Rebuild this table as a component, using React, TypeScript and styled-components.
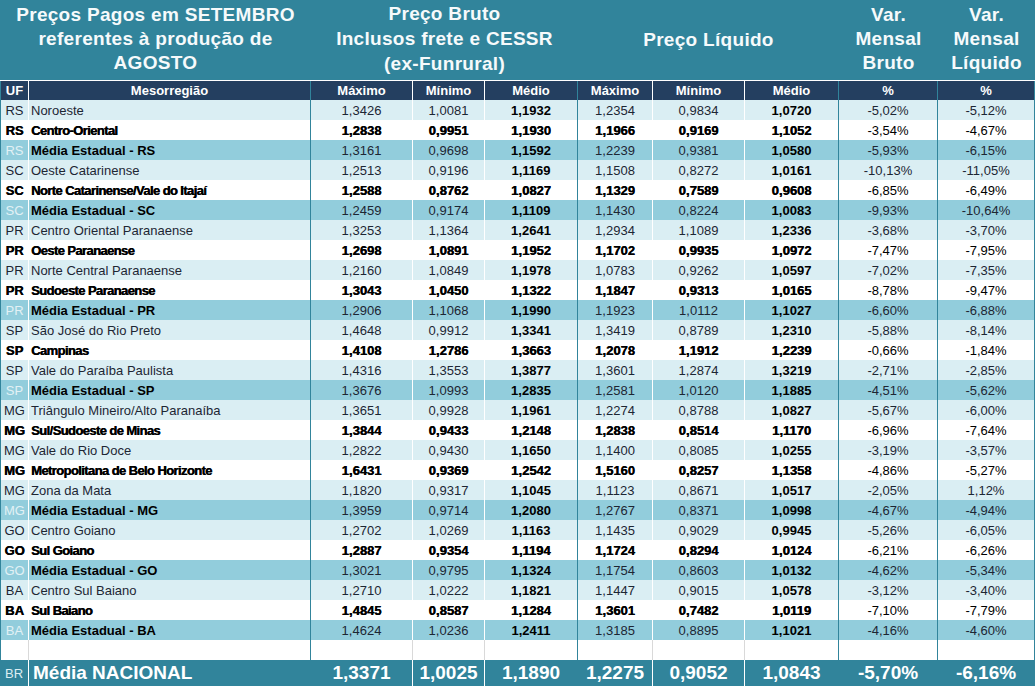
import React from "react";
import styled, { createGlobalStyle, css } from "styled-components";

const TEAL = "#31849b";
const NAVY = "#243f60";
const LIGHT = "#daeef3";
const MEDIUM = "#92cddc";
const COLS = "29px 282px 102px 72px 93px 75px 92px 94px 99px 97px";
const GROUP_END = [1, 4, 7, 8, 9];

const GlobalStyle = createGlobalStyle`
  html, body { margin: 0; padding: 0; background: #ffffff; }
  body { font-family: "Liberation Sans", Arial, sans-serif; }
  * { box-sizing: border-box; }
`;

const Sheet = styled.div`
  width: 1035px;
`;

const TitleBand = styled.div`
  display: grid;
  grid-template-columns: 311px 267px 261px 99px 97px;
  height: 80px;
  background: ${TEAL};
  color: #f6fafb;
  font-weight: bold;
  font-size: 19px;
  letter-spacing: 0.3px;
  line-height: 24px;
`;

const TitleCell = styled.div<{ $shift?: number; $lh?: number }>`
  display: flex;
  align-items: center;
  justify-content: center;
  text-align: center;
  padding-bottom: ${(p) => p.$shift ?? 0}px;
  line-height: ${(p) => p.$lh ?? 24}px;
`;

type RowKind = "light" | "strong" | "avg" | "empty";

const rowBg: Record<RowKind, string> = {
  light: LIGHT,
  strong: "#ffffff",
  avg: MEDIUM,
  empty: "#ffffff",
};

const Row = styled.div<{ $kind: RowKind }>`
  display: grid;
  grid-template-columns: ${COLS};
  height: 20px;
  background: ${(p) => rowBg[p.$kind]};
  color: ${(p) => (p.$kind === "strong" ? "#000" : "#1d2633")};
  font-size: 13px;
  ${(p) =>
    p.$kind === "strong" &&
    css`
      font-weight: bold;
      text-shadow: 0.45px 0 0 #000;
    `}
`;

const HeaderRow = styled.div`
  display: grid;
  grid-template-columns: ${COLS};
  height: 20px;
  background: ${NAVY};
  color: #ffffff;
  font-weight: bold;
  font-size: 13px;
  border-top: 1px solid #ffffff;
`;

const FooterRow = styled.div`
  display: grid;
  grid-template-columns: ${COLS};
  height: 26px;
  background: ${TEAL};
  color: #ffffff;
  font-weight: bold;
  font-size: 19px;
`;

const Cell = styled.div<{
  $group?: boolean;
  $align?: "left" | "center";
  $bold?: boolean;
  $normal?: boolean;
  $faded?: boolean;
  $tight?: boolean;
  $edge?: boolean;
  $sepColor?: string;
}>`
  display: flex;
  align-items: center;
  justify-content: ${(p) => (p.$align === "left" ? "flex-start" : "center")};
  padding-left: ${(p) => (p.$align === "left" ? "2px" : "0")};
  border-right: 1px solid
    ${(p) => (p.$group ? TEAL : p.$sepColor ?? "#ffffff")};
  white-space: nowrap;
  overflow: hidden;
  ${(p) =>
    p.$edge &&
    css`
      border-left: 1px solid ${TEAL};
    `}
  ${(p) =>
    p.$bold &&
    css`
      font-weight: bold;
      color: #000;
    `}
  ${(p) =>
    p.$tight &&
    css`
      letter-spacing: -0.6px;
    `}
  ${(p) =>
    p.$normal &&
    css`
      font-weight: normal;
      text-shadow: none;
    `}
  ${(p) =>
    p.$faded &&
    css`
      color: #e2f1f5;
      font-weight: normal;
    `}
`;

const FooterUf = styled(Cell)`
  font-size: 13px;
  font-weight: normal;
  color: #dcedf2;
`;

const FooterName = styled(Cell)`
  padding-left: 4px;
`;

type DataRow = {
  uf: string;
  name: string;
  kind: RowKind;
  v: string[];
};

const rows: DataRow[] = [
  { uf: "RS", name: "Noroeste", kind: "light", v: ["1,3426", "1,0081", "1,1932", "1,2354", "0,9834", "1,0720", "-5,02%", "-5,12%"] },
  { uf: "RS", name: "Centro-Oriental", kind: "strong", v: ["1,2838", "0,9951", "1,1930", "1,1966", "0,9169", "1,1052", "-3,54%", "-4,67%"] },
  { uf: "RS", name: "Média Estadual - RS", kind: "avg", v: ["1,3161", "0,9698", "1,1592", "1,2239", "0,9381", "1,0580", "-5,93%", "-6,15%"] },
  { uf: "SC", name: "Oeste Catarinense", kind: "light", v: ["1,2513", "0,9196", "1,1169", "1,1508", "0,8272", "1,0161", "-10,13%", "-11,05%"] },
  { uf: "SC", name: "Norte Catarinense/Vale do Itajaí", kind: "strong", v: ["1,2588", "0,8762", "1,0827", "1,1329", "0,7589", "0,9608", "-6,85%", "-6,49%"] },
  { uf: "SC", name: "Média Estadual - SC", kind: "avg", v: ["1,2459", "0,9174", "1,1109", "1,1430", "0,8224", "1,0083", "-9,93%", "-10,64%"] },
  { uf: "PR", name: "Centro Oriental Paranaense", kind: "light", v: ["1,3253", "1,1364", "1,2641", "1,2934", "1,1089", "1,2336", "-3,68%", "-3,70%"] },
  { uf: "PR", name: "Oeste Paranaense", kind: "strong", v: ["1,2698", "1,0891", "1,1952", "1,1702", "0,9935", "1,0972", "-7,47%", "-7,95%"] },
  { uf: "PR", name: "Norte Central Paranaense", kind: "light", v: ["1,2160", "1,0849", "1,1978", "1,0783", "0,9262", "1,0597", "-7,02%", "-7,35%"] },
  { uf: "PR", name: "Sudoeste Paranaense", kind: "strong", v: ["1,3043", "1,0450", "1,1322", "1,1847", "0,9313", "1,0165", "-8,78%", "-9,47%"] },
  { uf: "PR", name: "Média Estadual - PR", kind: "avg", v: ["1,2906", "1,1068", "1,1990", "1,1923", "1,0112", "1,1027", "-6,60%", "-6,88%"] },
  { uf: "SP", name: "São José do Rio Preto", kind: "light", v: ["1,4648", "0,9912", "1,3341", "1,3419", "0,8789", "1,2310", "-5,88%", "-8,14%"] },
  { uf: "SP", name: "Campinas", kind: "strong", v: ["1,4108", "1,2786", "1,3663", "1,2078", "1,1912", "1,2239", "-0,66%", "-1,84%"] },
  { uf: "SP", name: "Vale do Paraíba Paulista", kind: "light", v: ["1,4316", "1,3553", "1,3877", "1,3601", "1,2874", "1,3219", "-2,71%", "-2,85%"] },
  { uf: "SP", name: "Média Estadual - SP", kind: "avg", v: ["1,3676", "1,0993", "1,2835", "1,2581", "1,0120", "1,1885", "-4,51%", "-5,62%"] },
  { uf: "MG", name: "Triângulo Mineiro/Alto Paranaíba", kind: "light", v: ["1,3651", "0,9928", "1,1961", "1,2274", "0,8788", "1,0827", "-5,67%", "-6,00%"] },
  { uf: "MG", name: "Sul/Sudoeste de Minas", kind: "strong", v: ["1,3844", "0,9433", "1,2148", "1,2838", "0,8514", "1,1170", "-6,96%", "-7,64%"] },
  { uf: "MG", name: "Vale do Rio Doce", kind: "light", v: ["1,2822", "0,9430", "1,1650", "1,1400", "0,8085", "1,0255", "-3,19%", "-3,57%"] },
  { uf: "MG", name: "Metropolitana de Belo Horizonte", kind: "strong", v: ["1,6431", "0,9369", "1,2542", "1,5160", "0,8257", "1,1358", "-4,86%", "-5,27%"] },
  { uf: "MG", name: "Zona da Mata", kind: "light", v: ["1,1820", "0,9317", "1,1045", "1,1123", "0,8671", "1,0517", "-2,05%", "1,12%"] },
  { uf: "MG", name: "Média Estadual - MG", kind: "avg", v: ["1,3959", "0,9714", "1,2080", "1,2767", "0,8371", "1,0998", "-4,67%", "-4,94%"] },
  { uf: "GO", name: "Centro Goiano", kind: "light", v: ["1,2702", "1,0269", "1,1163", "1,1435", "0,9029", "0,9945", "-5,26%", "-6,05%"] },
  { uf: "GO", name: "Sul Goiano", kind: "strong", v: ["1,2887", "0,9354", "1,1194", "1,1724", "0,8294", "1,0124", "-6,21%", "-6,26%"] },
  { uf: "GO", name: "Média Estadual - GO", kind: "avg", v: ["1,3021", "0,9795", "1,1324", "1,1754", "0,8603", "1,0132", "-4,62%", "-5,34%"] },
  { uf: "BA", name: "Centro Sul Baiano", kind: "light", v: ["1,2710", "1,0222", "1,1821", "1,1447", "0,9015", "1,0578", "-3,12%", "-3,40%"] },
  { uf: "BA", name: "Sul Baiano", kind: "strong", v: ["1,4845", "0,8587", "1,1284", "1,3601", "0,7482", "1,0119", "-7,10%", "-7,79%"] },
  { uf: "BA", name: "Média Estadual - BA", kind: "avg", v: ["1,4624", "1,0236", "1,2411", "1,3185", "0,8895", "1,1021", "-4,16%", "-4,60%"] },
];

const headers = ["Máximo", "Mínimo", "Médio", "Máximo", "Mínimo", "Médio", "%", "%"];
const national = ["1,3371", "1,0025", "1,1890", "1,2275", "0,9052", "1,0843", "-5,70%", "-6,16%"];

const isGroupEnd = (col: number) => GROUP_END.includes(col);

function Data({ row }: { row: DataRow }) {
  const strong = row.kind === "strong";
  return (
    <Row $kind={row.kind}>
      <Cell $edge $faded={row.kind === "avg"}>
        {row.uf}
      </Cell>
      <Cell $group $align="left" $bold={row.kind === "avg"} $tight={strong}>
        {row.name}
      </Cell>
      {row.v.map((val, i) => {
        const col = i + 2;
        const isMedio = i === 2 || i === 5;
        const isVar = i >= 6;
        return (
          <Cell
            key={i}
            $group={isGroupEnd(col)}
            $bold={isMedio}
            $normal={isVar}
          >
            {val}
          </Cell>
        );
      })}
    </Row>
  );
}

export default function App() {
  return (
    <Sheet>
      <GlobalStyle />
      <TitleBand>
        <TitleCell $shift={2}>
          Preços Pagos em SETEMBRO
          <br />
          referentes à produção de
          <br />
          AGOSTO
        </TitleCell>
        <TitleCell $shift={4} $lh={25}>
          Preço Bruto
          <br />
          Inclusos frete e CESSR
          <br />
          (ex-Funrural)
        </TitleCell>
        <TitleCell>Preço Líquido</TitleCell>
        <TitleCell $shift={2}>
          Var.
          <br />
          Mensal
          <br />
          Bruto
        </TitleCell>
        <TitleCell $shift={2}>
          Var.
          <br />
          Mensal
          <br />
          Líquido
        </TitleCell>
      </TitleBand>
      <HeaderRow>
        <Cell $edge>UF</Cell>
        <Cell $group>Mesorregião</Cell>
        {headers.map((h, i) => (
          <Cell key={i} $group={isGroupEnd(i + 2)}>
            {h}
          </Cell>
        ))}
      </HeaderRow>
      {rows.map((r, i) => (
        <Data key={i} row={r} />
      ))}
      <Row $kind="empty">
        {Array.from({ length: 10 }).map((_, i) => (
          <Cell key={i} $edge={i === 0} $group={isGroupEnd(i)} $sepColor="#d9d9d9" />
        ))}
      </Row>
      <FooterRow>
        <FooterUf>BR</FooterUf>
        <FooterName $group $align="left">
          Média NACIONAL
        </FooterName>
        {national.map((val, i) => (
          <Cell key={i} $group={isGroupEnd(i + 2)}>
            {val}
          </Cell>
        ))}
      </FooterRow>
    </Sheet>
  );
}
